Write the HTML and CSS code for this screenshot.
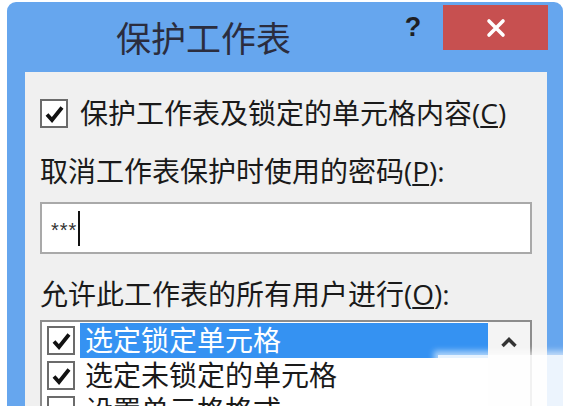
FILE: index.html
```html
<!DOCTYPE html>
<html lang="zh-CN">
  <head>
    <meta charset="UTF-8" />
    <title>保护工作表</title>
    <link rel="stylesheet" href="styles.css">
  </head>
  <body>
    <div class="dialog">
      <div class="titlebar">
        <div class="title">保护工作表</div>
        <div class="help">?</div>
        <div class="close">
          <svg width="20" height="20" viewBox="0 0 20 20">
            <path d="M3 3 L17 17 M17 3 L3 17" stroke="#fff" stroke-width="3.6" stroke-linecap="round" />
          </svg>
        </div>
      </div>
      <div class="panel">
        <div class="check-row">
          <span class="box">
            <svg width="23" height="24" viewBox="0 0 23 24">
              <path d="M4 12.5 L9 18 L19 5.5" fill="none" stroke="#111" stroke-width="3.8" />
            </svg>
          </span>
          <span class="label">保护工作表及锁定的单元格内容(<u>C</u>)</span>
        </div>
        <div class="field-label">取消工作表保护时使用的密码(<u>P</u>):</div>
        <div class="password">
          <span class="stars">***</span><span class="caret"></span>
        </div>
        <div class="field-label third">允许此工作表的所有用户进行(<u>O</u>):</div>
        <div class="listbox">
          <div class="items">
            <div class="item">
              <span class="box">
                <svg width="23" height="24" viewBox="0 0 23 24">
                  <path d="M4 12.5 L9 18 L19 5.5" fill="none" stroke="#111" stroke-width="3.8" />
                </svg>
              </span>
              <span class="item-text selected">选定锁定单元格</span>
            </div>
            <div class="item">
              <span class="box">
                <svg width="23" height="24" viewBox="0 0 23 24">
                  <path d="M4 12.5 L9 18 L19 5.5" fill="none" stroke="#111" stroke-width="3.8" />
                </svg>
              </span>
              <span class="item-text">选定未锁定的单元格</span>
            </div>
            <div class="item">
              <span class="box"></span>
              <span class="item-text">设置单元格格式</span>
            </div>
          </div>
          <div class="scrollbar">
            <div class="arrow-up">
              <svg width="18" height="12" viewBox="0 0 18 12">
                <path d="M2.5 10 L9 3.5 L15.5 10" fill="none" stroke="#333" stroke-width="3.4" />
              </svg>
            </div>
          </div>
        </div>
      </div>
    </div>
    <div class="watermark"></div>
  </body>
</html>
```

FILE: styles.css
```css
* {
  margin: 0;
  padding: 0;
  box-sizing: border-box;
}

body {
  background: #fff;
  font-family: "Open Sans", "Noto Sans CJK SC", sans-serif;
  width: 568px;
  height: 411px;
  overflow: hidden;
  position: relative;
}

.dialog {
  margin: 2px 0 0 7px;
  width: 556px;
  height: 404px;
  background: #66a6ee;
  border-radius: 9px 9px 0 0;
  display: flex;
  flex-direction: column;
  overflow: hidden;
}

.titlebar {
  height: 70px;
  display: flex;
  align-items: flex-start;
  flex-shrink: 0;
}
.title {
  margin: 15px 0 0 109px;
  font-family: "Noto Sans CJK SC", sans-serif;
  font-size: 35px;
  line-height: 40px;
  color: #2b2d3e;
}
.help {
  margin: 3px 0 0 auto;
  width: 60px;
  height: 45px;
  text-align: center;
  font-family: "Liberation Sans", sans-serif;
  font-weight: bold;
  font-size: 27px;
  line-height: 45px;
  color: #1e1e24;
}
.close {
  margin: 3px 15px 0 0;
  width: 105px;
  height: 45px;
  background: #c75050;
  display: flex;
  align-items: center;
  justify-content: center;
}

.panel {
  flex: 1;
  margin: 0 16px 0 18px;
  padding: 26px 15px 0 15px;
  background: #f0f0f0;
  overflow: hidden;
  color: #1a1a1a;
  font-size: 28px;
}

.box {
  width: 28px;
  height: 29px;
  border: 2px solid #6b6b6b;
  background: #fff;
  display: flex;
  align-items: center;
  justify-content: center;
  flex-shrink: 0;
}

.check-row {
  display: flex;
  align-items: center;
  height: 31px;
}
.check-row .label {
  margin-left: 12px;
  line-height: 31px;
}

.field-label {
  margin-top: 25px;
  line-height: 34px;
}
.field-label.third {
  margin-top: 23px;
}

.password {
  margin-top: 14px;
  height: 52px;
  background: #fff;
  border: 2px solid #a9a9a9;
  display: flex;
  align-items: center;
  padding-left: 9px;
}
.stars {
  font-family: "Liberation Sans", sans-serif;
  font-size: 20px;
  line-height: 20px;
  letter-spacing: 1px;
  color: #333;
  margin-top: 4px;
}
.caret {
  width: 2px;
  height: 35px;
  background: #111;
  margin-left: 1px;
}

.listbox {
  margin-top: 9px;
  height: 130px;
  background: #fff;
  border: 2px solid #8c8c8c;
  display: flex;
}
.items {
  flex: 1;
  padding-top: 1px;
}
.item {
  height: 35px;
  display: flex;
  align-items: center;
  padding-left: 5px;
}
.item-text {
  flex: 1;
  margin-left: 5px;
  height: 35px;
  line-height: 35px;
  padding-left: 5px;
}
.item-text.selected {
  background: #3592f2;
  color: #fff;
}
.scrollbar {
  width: 42px;
  background: #f4f4f4;
}
.arrow-up {
  height: 36px;
  display: flex;
  align-items: center;
  justify-content: center;
  padding-top: 4px;
}

.watermark {
  position: absolute;
  left: 438px;
  top: 355px;
  width: 130px;
  height: 56px;
  background: rgba(255, 255, 255, 0.88);
  box-shadow: 0 0 6px 4px rgba(255, 255, 255, 0.6);
}
```
